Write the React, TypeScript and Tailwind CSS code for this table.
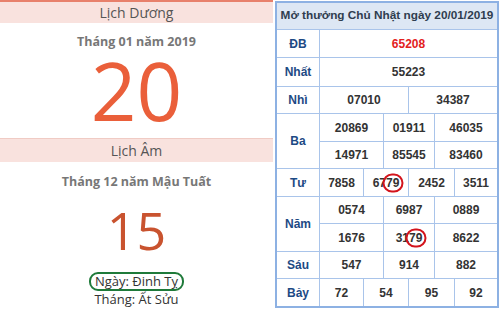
import type { ReactNode } from "react";

const cell = "bg-white flex items-center justify-center";

function Circled({ children }: { children: ReactNode }) {
  return (
    <span className="relative">
      {children}
      <span className="absolute left-1/2 top-1/2 -translate-x-1/2 -translate-y-1/2 w-[21px] h-[19px] rounded-full border-[2.5px] border-[#d3141c]" />
    </span>
  );
}

function Label({ text, span }: { text: string; span?: boolean }) {
  return (
    <div className={`${cell} text-[#1d4a84] ${span ? "row-span-2" : ""}`}>
      {text}
    </div>
  );
}

export default function App() {
  return (
    <div className="w-[500px] h-[310px] flex bg-white overflow-hidden">
      {/* lich duong / lich am */}
      <div className="w-[273px] flex flex-col items-center font-['Open_Sans',sans-serif]">
        <div className="w-full h-[23px] border-t-2 border-[#e8806b] bg-[#f9e2de] text-center text-[14px] leading-[21px] text-[#555]">
          Lịch Dương
        </div>
        <div className="mt-[10px] text-[12.5px] leading-[18px] font-bold text-[#777]">
          Tháng 01 năm 2019
        </div>
        <div className="h-[78px] text-[80px] leading-[78px] text-[#ea5f3a]">20</div>
        <div className="mt-[9px] w-full h-[24px] border-t border-[#f0cbc4] bg-[#f9e2de] text-center text-[14px] leading-[23px] text-[#555]">
          Lịch Âm
        </div>
        <div className="mt-[11px] text-[12.5px] leading-[18px] font-bold text-[#777]">
          Tháng 12 năm Mậu Tuất
        </div>
        <div className="mt-[13px] h-[52px] text-[52px] leading-[52px] text-[#c9532f]">15</div>
        <div className="mt-[16px] h-[19px] px-[4px] border-[2.5px] border-[#1f7a3a] rounded-[9px] text-[13px] leading-[14px] text-[#333]">
          Ngày: Đinh Tỵ
        </div>
        <div className="text-[13px] leading-[16px] text-[#333]">Tháng: Ất Sửu</div>
      </div>

      {/* ket qua */}
      <div className="ml-[2px] mt-[1px] w-[224px] h-[307px] border-2 border-[#8db1e3] bg-[#a9c4ea] grid grid-cols-[42px_1fr] grid-rows-[26px_27px_28px_26px_27px_26px_27px_26px_27px_26px_1fr] gap-px font-['Liberation_Sans',Arial,sans-serif] font-bold text-[12px] text-[#333]">
        <div className="col-span-2 bg-[#dde7f4] flex items-center justify-center text-[11.8px] text-[#2f3d4f]">
          Mở thưởng Chủ Nhật ngày 20/01/2019
        </div>

        <Label text="ĐB" />
        <div className={`${cell} text-[#e3211d]`}>65208</div>

        <Label text="Nhất" />
        <div className={cell}>55223</div>

        <Label text="Nhì" />
        <div className="grid grid-cols-2 gap-px">
          <div className={cell}>07010</div>
          <div className={cell}>34387</div>
        </div>

        <Label text="Ba" span />
        <div className="grid grid-cols-[63px_50px_1fr] gap-px">
          <div className={cell}>20869</div>
          <div className={cell}>01911</div>
          <div className={cell}>46035</div>
        </div>
        <div className="grid grid-cols-[63px_50px_1fr] gap-px">
          <div className={cell}>14971</div>
          <div className={cell}>85545</div>
          <div className={cell}>83460</div>
        </div>

        <Label text="Tư" />
        <div className="grid grid-cols-[43px_44px_45px_1fr] gap-px">
          <div className={cell}>7858</div>
          <div className={cell}>
            67<Circled>79</Circled>
          </div>
          <div className={cell}>2452</div>
          <div className={cell}>3511</div>
        </div>

        <Label text="Năm" span />
        <div className="grid grid-cols-[63px_50px_1fr] gap-px">
          <div className={cell}>0574</div>
          <div className={cell}>6987</div>
          <div className={cell}>0889</div>
        </div>
        <div className="grid grid-cols-[63px_50px_1fr] gap-px">
          <div className={cell}>1676</div>
          <div className={cell}>
            31<Circled>79</Circled>
          </div>
          <div className={cell}>8622</div>
        </div>

        <Label text="Sáu" />
        <div className="grid grid-cols-[63px_50px_1fr] gap-px">
          <div className={cell}>547</div>
          <div className={cell}>914</div>
          <div className={cell}>882</div>
        </div>

        <Label text="Bảy" />
        <div className="grid grid-cols-[43px_44px_45px_1fr] gap-px">
          <div className={cell}>72</div>
          <div className={cell}>54</div>
          <div className={cell}>95</div>
          <div className={cell}>92</div>
        </div>
      </div>
    </div>
  );
}
